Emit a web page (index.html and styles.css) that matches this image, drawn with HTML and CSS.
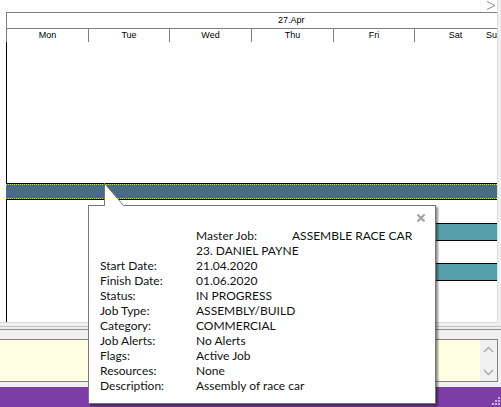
FILE: index.html
```html
<!DOCTYPE html>
<html lang="en">
  <head>
    <meta charset="UTF-8" />
    <title>Job Planner</title>
    <link rel="stylesheet" href="styles.css">
  </head>
  <body>
    <div class="window">
      <div class="planner">
        <div class="topbar">
          <svg class="next-arrow" width="10" height="11" viewBox="0 0 10 11">
            <polyline points="1,1.5 9,5.5 1,9.5" fill="none" stroke="#8a8a8a" stroke-width="1" />
          </svg>
        </div>

        <div class="timescale">
          <div class="month">27.Apr</div>
          <div class="days">
            <div class="day day-wide">Mon</div>
            <div class="day">Tue</div>
            <div class="day day-wide">Wed</div>
            <div class="day day-wide">Thu</div>
            <div class="day">Fri</div>
            <div class="day day-sat">Sat</div>
            <div class="day day-sun">Su</div>
          </div>
        </div>

        <div class="chart">
          <div class="job-bar selected"><div class="job-fill"></div></div>
          <div class="job-bar teal first"></div>
          <div class="job-bar teal second"></div>
        </div>
      </div>

      <div class="divider">
        <div class="rule rule-light"></div>
        <div class="rule rule-dark"></div>
      </div>

      <div class="notes">
        <div class="notes-text"></div>
        <div class="scrollbar">
          <svg width="11" height="7" viewBox="0 0 11 7">
            <polyline points="1,6 5.5,1.5 10,6" fill="none" stroke="#a8a8a8" stroke-width="1.4" />
          </svg>
          <svg width="11" height="7" viewBox="0 0 11 7">
            <polyline points="1,1 5.5,5.5 10,1" fill="none" stroke="#a8a8a8" stroke-width="1.4" />
          </svg>
        </div>
      </div>

      <div class="statusbar">
        <svg class="grip" width="10" height="10" viewBox="0 0 10 10">
          <rect x="8" y="0" width="2" height="2" fill="#c9b6d8" />
          <rect x="5" y="3" width="2" height="2" fill="#c9b6d8" />
          <rect x="8" y="3" width="2" height="2" fill="#c9b6d8" />
          <rect x="2" y="6" width="2" height="2" fill="#c9b6d8" />
          <rect x="5" y="6" width="2" height="2" fill="#c9b6d8" />
          <rect x="8" y="6" width="2" height="2" fill="#c9b6d8" />
        </svg>
      </div>

      <!-- Hover tooltip for the selected job -->
      <div class="tooltip">
        <svg class="tooltip-pointer" width="20" height="23" viewBox="0 0 20 23">
          <polygon points="0,0 20,23 0,23" fill="#ffffff" />
          <path d="M0.5 0 V23 M0.5 0.5 L19.5 22.5" fill="none" stroke="#767676" stroke-width="1" />
        </svg>
        <svg class="tooltip-close" width="10" height="10" viewBox="0 0 10 10">
          <path d="M1.5 1.5 L8.5 8.5 M8.5 1.5 L1.5 8.5" stroke="#a0a0a0" stroke-width="2" />
        </svg>
        <div class="details">
          <span></span><span>Master Job:</span><span>ASSEMBLE RACE CAR</span>
          <span></span><span class="wide">23. DANIEL PAYNE</span>
          <span>Start Date:</span><span class="wide">21.04.2020</span>
          <span>Finish Date:</span><span class="wide">01.06.2020</span>
          <span>Status:</span><span class="wide">IN PROGRESS</span>
          <span>Job Type:</span><span class="wide">ASSEMBLY/BUILD</span>
          <span>Category:</span><span class="wide">COMMERCIAL</span>
          <span>Job Alerts:</span><span class="wide">No Alerts</span>
          <span>Flags:</span><span class="wide">Active Job</span>
          <span>Resources:</span><span class="wide">None</span>
          <span>Description:</span><span class="wide">Assembly of race car</span>
        </div>
      </div>
    </div>
  </body>
</html>
```

FILE: styles.css
```css
* {
  margin: 0;
  padding: 0;
  box-sizing: border-box;
}

body {
  font-family: "Lato", "Noto Sans", sans-serif;
  background: #ffffff;
  color: #000000;
  overflow: hidden;
}

.window {
  position: relative;
  width: 501px;
  height: 407px;
  overflow: hidden;
  background: #f0f0f0;
}

/* Gantt area */
.planner {
  width: 498px;
  height: 323px;
  background: #ffffff;
  border-right: 1px solid #dedede;
  border-bottom: 1px solid #dcdcdc;
  display: flex;
  flex-direction: column;
}

.topbar {
  height: 12px;
  display: flex;
  justify-content: flex-end;
  padding-right: 1px;
}

.next-arrow {
  display: block;
}

.timescale {
  margin-left: 6px;
  border-top: 1px solid #808080;
  border-left: 1px solid #808080;
  font-family: "Liberation Sans", Arial, sans-serif;
  font-size: 9px;
  line-height: 10px;
}

.month {
  height: 16px;
  padding: 2px 0 0 271px;
  border-bottom: 1px solid #808080;
}

.days {
  display: flex;
  height: 13px;
}

.day {
  width: 81px;
  flex-shrink: 0;
  border-right: 1px solid #808080;
  text-align: center;
  padding-top: 1px;
}

.day-wide {
  width: 82px;
}

.day-sat {
  width: 67px;
  border-right: none;
  padding-left: 14px;
}

.day-sun {
  width: 14px;
  border-right: none;
  text-align: left;
  padding-left: 4px;
  white-space: nowrap;
}

.chart {
  flex: 1;
  margin-left: 6px;
  border-left: 1px solid #000000;
  display: flex;
  flex-direction: column;
}

.job-bar {
  border-top: 1px solid #000000;
  border-bottom: 1px solid #000000;
}

.selected {
  margin-top: 141px;
  margin-left: -1px;
  height: 17px;
}

.job-fill {
  height: 15px;
  background: #4a6b88;
  border-top: 1px dotted #d4ec1c;
  border-bottom: 1px dotted #d4ec1c;
}

.teal {
  height: 18px;
  margin-left: 280px;
  background: #56a1a9;
}

.first {
  margin-top: 23px;
}

.second {
  margin-top: 22px;
}

/* Separator between planner and notes */
.divider {
  height: 16px;
  padding-top: 3px;
}

.rule {
  height: 1px;
}

.rule-light {
  background: #c4c4c4;
}

.rule-dark {
  margin-top: 2px;
  background: #8c8c8c;
}

.notes {
  display: flex;
  width: 499px;
  height: 43px;
  margin-left: -1px;
  border: 1px solid #828282;
  background: #fefee2;
}

.notes-text {
  flex: 1;
}

.scrollbar {
  width: 17px;
  background: #f0f0f0;
  display: flex;
  flex-direction: column;
  align-items: center;
  justify-content: space-between;
  padding: 6px 0 5px;
}

.statusbar {
  margin-top: 5px;
  height: 21px;
  background: #7d3fa7;
  display: flex;
  justify-content: flex-end;
  align-items: flex-end;
  padding: 0 1px 1px 0;
}

/* Tooltip */
.tooltip {
  position: absolute;
  left: 88px;
  top: 205px;
  width: 348px;
  height: 199px;
  background: #ffffff;
  border: 1px solid #767676;
  box-shadow: 2px 2px 2px rgba(0, 0, 0, 0.45);
}

.tooltip-pointer {
  position: absolute;
  left: 15px;
  top: -23px;
}

.tooltip-close {
  position: absolute;
  left: 327px;
  top: 7px;
}

.details {
  display: grid;
  grid-template-columns: 96px 96px auto;
  padding: 22px 0 0 11px;
  font-size: 12px;
  line-height: 15px;
  color: #111111;
}

.wide {
  grid-column: span 2;
}
```
